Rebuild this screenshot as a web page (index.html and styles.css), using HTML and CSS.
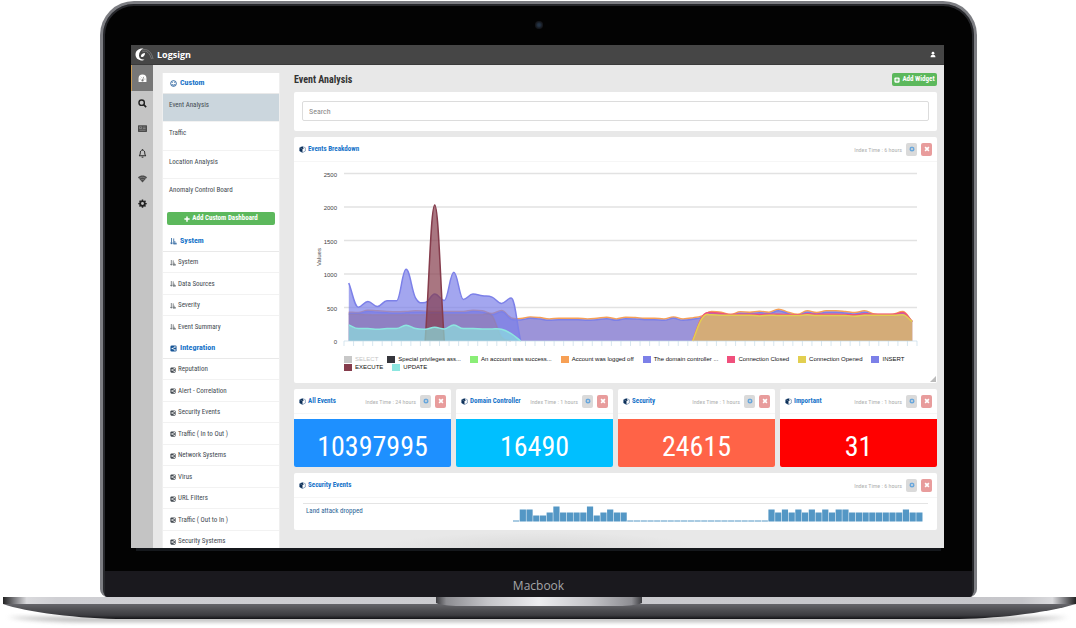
FILE: index.html
```html
<!DOCTYPE html>
<html lang="en">
<head>
<meta charset="utf-8">
<meta name="viewport" content="width=device-width, initial-scale=1">
<title>Logsign - Event Analysis</title>
<link rel="stylesheet" href="styles.css">
</head>
<body>
<svg class="sprite" aria-hidden="true">
  <symbol id="gear" viewBox="0 0 16 16"><path fill-rule="evenodd" d="M6.8 1h2.4l.4 1.9 1.2.5 1.7-1 1.6 1.700-1 1.600.5 1.200L15.500 7v2.200l-1.900.4-.5 1.200 1 1.700-1.600 1.600-1.700-1-1.200.5-.4 1.900H6.800l-.4-1.900-1.200-.5-1.700 1-1.600-1.600 1-1.700-.5-1.200L.5 9.200V7l1.900-.4.5-1.200-1-1.600 1.600-1.700 1.700 1 1.200-.5zM8 5.500a2.600 2.600 0 1 0 0 5.200 2.600 2.600 0 0 0 0-5.200z"/></symbol>
  <symbol id="close" viewBox="0 0 16 16"><path d="M3 3l10 10M13 3L3 13" stroke="currentColor" stroke-width="4.500"/></symbol>
  <symbol id="cube" viewBox="0 0 16 16"><path d="M8 1l6.500 3v7.500L8 15l-6.500-3.500V4z" fill="#fff" stroke="#3a6291" stroke-width="1.200"/><path d="M1.500 4L8 7v8l-6.500-3.500z" fill="#0d2f57"/><path d="M8 1L1.500 4 8 7l3-1.500z" fill="#0d2f57"/></symbol>
  <symbol id="sort" viewBox="0 0 16 16"><path d="M3.500 0v13M1 10.500l2.500 3.500L6 10.500M8.500 1v13M11 7v7M8 13.500h7.500M13.500 10.500v3" fill="none" stroke="currentColor" stroke-width="1.700"/></symbol>
  <symbol id="share" viewBox="0 0 16 16"><rect x="1" y="1" width="14" height="14" rx="3"/><path d="M11.500 4.500L5.500 8l6 3.500" fill="none" stroke="#fff" stroke-width="1.600"/><circle cx="11.500" cy="4.500" r="1.700" fill="#fff"/><circle cx="5.200" cy="8" r="1.700" fill="#fff"/><circle cx="11.500" cy="11.500" r="1.700" fill="#fff"/></symbol>
</svg>

<div class="laptop">
  <div class="lid">
    <span class="camera"></span>
    <div class="screen">
      <header class="topbar">
        <a class="brand" href="#">
          <svg class="brand-mark" viewBox="0 0 38 26" aria-hidden="true">
            <path d="M17 1C8 0 1 5 1 13c0 7 5 11 12 12 3 0 5-1 6-2-6 1-11-2-11-8 0-6 3-11 9-14z" fill="#fff"/>
            <path d="M12 15c1-3 4-5 8-5 0 4-2 7-5 8-2 0-4-1-3-3z" fill="#fff"/>
            <path d="M14 4c11-4 20 5 22 18M15 7c9-3 15 4 18 15" fill="none" stroke="#999" stroke-width="1.200"/>
          </svg>
          <span>Logsign</span>
        </a>
        <button class="user" aria-label="Account"><svg viewBox="0 0 16 16"><circle cx="8" cy="4.500" r="3.700"/><path d="M1.500 15c0-5 3-6.500 6.500-6.500s6.500 1.500 6.500 6.500z"/></svg></button>
      </header>
      <div class="workspace">
        <nav class="rail">
          <a class="active" href="#" aria-label="Dashboards"><svg viewBox="0 0 16 16"><path d="M1 14V8a7 7 0 0 1 14 0v6z"/><path d="M8 12l2-7M3 9h1.500M5 5l1 1M11.500 9H13" stroke="#777" stroke-width="1.300"/><circle cx="8" cy="11.500" r="2" fill="#777"/></svg></a>
          <a href="#" aria-label="Search"><svg viewBox="0 0 16 16"><circle cx="6.500" cy="6.500" r="4.800" fill="none" stroke="currentColor" stroke-width="2.500"/><path d="M10 10l4.500 4.500" stroke="currentColor" stroke-width="3"/></svg></a>
          <a class="dim" href="#" aria-label="Reports"><svg viewBox="0 0 16 16"><rect x="0" y="2" width="16" height="12" rx="1"/><path d="M2.500 5h4v3h-4zM8.500 5.500h5M8.500 8h5M2.500 11h11" fill="none" stroke="#aaa"/></svg></a>
          <a href="#" aria-label="Alerts"><svg viewBox="0 0 16 16"><path d="M8 2c-3 0-4 2.500-4 5 0 3-1 4-2.200 5h12.400C13 11 12 10 12 7c0-2.500-1-5-4-5zM8 .5V2M6.500 14.500h3" fill="none" stroke="currentColor" stroke-width="1.700"/></svg></a>
          <a class="dim" href="#" aria-label="Network"><svg viewBox="0 0 16 16"><path d="M8 15L0 6c4-4.500 12-4.500 16 0z"/><path d="M2 8c3.500-3 8.500-3 12 0M4.500 11c2-1.700 5-1.700 7 0" fill="none" stroke="#aaa" stroke-width=".8"/></svg></a>
          <a href="#" aria-label="Settings"><svg><use href="#gear"/></svg></a>
        </nav>

        <aside class="sidebar">
          <h2><svg class="outline" viewBox="0 0 16 16"><circle cx="8" cy="8" r="6.500"/><path d="M4.500 9.500c1 3 6 3 7 0M5.500 5v1.500M10.500 5v1.500"/></svg>Custom</h2>
          <ul class="tall">
            <li class="selected"><a href="#">Event Analysis</a></li>
            <li><a href="#">Traffic</a></li>
            <li><a href="#">Location Analysis</a></li>
            <li><a href="#">Anomaly Control Board</a></li>
          </ul>
          <button class="green add-dashboard"><svg viewBox="0 0 16 16"><path d="M8 1v14M1 8h14" stroke="currentColor" stroke-width="4"/></svg>Add Custom Dashboard</button>
          <h2><svg><use href="#sort"/></svg>System</h2>
          <ul>
            <li><a href="#"><svg><use href="#sort"/></svg>System</a></li>
            <li><a href="#"><svg><use href="#sort"/></svg>Data Sources</a></li>
            <li><a href="#"><svg><use href="#sort"/></svg>Severity</a></li>
            <li><a href="#"><svg><use href="#sort"/></svg>Event Summary</a></li>
          </ul>
          <h2><svg><use href="#share"/></svg>Integration</h2>
          <ul>
            <li><a href="#"><svg><use href="#share"/></svg>Reputation</a></li>
            <li><a href="#"><svg><use href="#share"/></svg>Alert - Correlation</a></li>
            <li><a href="#"><svg><use href="#share"/></svg>Security Events</a></li>
            <li><a href="#"><svg><use href="#share"/></svg>Traffic ( In to Out )</a></li>
            <li><a href="#"><svg><use href="#share"/></svg>Network Systems</a></li>
            <li><a href="#"><svg><use href="#share"/></svg>Virus</a></li>
            <li><a href="#"><svg><use href="#share"/></svg>URL Filters</a></li>
            <li><a href="#"><svg><use href="#share"/></svg>Traffic ( Out to In )</a></li>
            <li><a href="#"><svg><use href="#share"/></svg>Security Systems</a></li>
          </ul>
        </aside>

        <main class="main">
          <div class="title-row">
            <h1>Event Analysis</h1>
            <button class="green add-widget"><svg viewBox="0 0 16 16"><rect x="1" y="1" width="14" height="14" rx="3" fill="#fff"/><path d="M8 4v8M4 8h8" stroke="#5cb85c" stroke-width="2.500"/></svg>Add Widget</button>
          </div>
          <form class="card search"><input type="search" placeholder="Search" aria-label="Search"></form>

          <section class="card breakdown">
            <div class="card-head">
              <h3><svg><use href="#cube"/></svg>Events Breakdown</h3>
              <span class="index">Index Time : 6 hours</span>
              <button class="tool" aria-label="Settings"><svg><use href="#gear"/></svg></button>
              <button class="tool remove" aria-label="Remove"><svg><use href="#close"/></svg></button>
            </div>
            <svg class="chart" id="chart" viewBox="0 0 643 188" role="img" aria-label="Events Breakdown"></svg>
            <ul class="legend">
              <li class="off"><i class="c-grey"></i>SELECT</li>
              <li><i class="c-dark"></i>Special privileges ass...</li>
              <li><i class="c-green"></i>An account was success...</li>
              <li><i class="c-orange"></i>Account was logged off</li>
              <li><i class="c-violet"></i>The domain controller ...</li>
              <li><i class="c-pink"></i>Connection Closed</li>
              <li><i class="c-yellow"></i>Connection Opened</li>
              <li><i class="c-violet"></i>INSERT</li>
              <li><i class="c-maroon"></i>EXECUTE</li>
              <li><i class="c-teal"></i>UPDATE</li>
            </ul>
            <span class="grip"></span>
          </section>

          <div class="tiles">
            <section class="card tile">
              <div class="card-head">
                <h3><svg><use href="#cube"/></svg>All Events</h3>
                <span class="index">Index Time : 24 hours</span>
                <button class="tool" aria-label="Settings"><svg><use href="#gear"/></svg></button>
                <button class="tool remove" aria-label="Remove"><svg><use href="#close"/></svg></button>
              </div>
              <p class="count blue">10397995</p>
            </section>
            <section class="card tile">
              <div class="card-head">
                <h3><svg><use href="#cube"/></svg>Domain Controller</h3>
                <span class="index">Index Time : 1 hours</span>
                <button class="tool" aria-label="Settings"><svg><use href="#gear"/></svg></button>
                <button class="tool remove" aria-label="Remove"><svg><use href="#close"/></svg></button>
              </div>
              <p class="count sky">16490</p>
            </section>
            <section class="card tile">
              <div class="card-head">
                <h3><svg><use href="#cube"/></svg>Security</h3>
                <span class="index">Index Time : 1 hours</span>
                <button class="tool" aria-label="Settings"><svg><use href="#gear"/></svg></button>
                <button class="tool remove" aria-label="Remove"><svg><use href="#close"/></svg></button>
              </div>
              <p class="count tomato">24615</p>
            </section>
            <section class="card tile">
              <div class="card-head">
                <h3><svg><use href="#cube"/></svg>Important</h3>
                <span class="index">Index Time : 1 hours</span>
                <button class="tool" aria-label="Settings"><svg><use href="#gear"/></svg></button>
                <button class="tool remove" aria-label="Remove"><svg><use href="#close"/></svg></button>
              </div>
              <p class="count red">31</p>
            </section>
          </div>

          <section class="card events">
            <div class="card-head">
              <h3><svg><use href="#cube"/></svg>Security Events</h3>
              <span class="index">Index Time : 6 hours</span>
              <button class="tool" aria-label="Settings"><svg><use href="#gear"/></svg></button>
              <button class="tool remove" aria-label="Remove"><svg><use href="#close"/></svg></button>
            </div>
            <div class="event-row">
              <a href="#">Land attack dropped</a>
              <svg class="spark" id="spark" viewBox="0 0 410 16" role="img" aria-label="Land attack dropped over time"></svg>
            </div>
          </section>
        </main>
      </div>
    </div>
    <div class="edge"></div>
    <div class="chin">Macbook</div>
  </div>
  <svg class="base" viewBox="0 0 1076 31" preserveAspectRatio="none" aria-hidden="true">
    <defs>
      <linearGradient id="under" x1="0" y1="0" x2="0" y2="1"><stop offset="0" stop-color="#66666b"/><stop offset=".3" stop-color="#545458"/><stop offset=".75" stop-color="#3c3c40"/><stop offset="1" stop-color="#131316"/></linearGradient>
      <linearGradient id="lip"><stop offset="0" stop-color="#222"/><stop offset=".01" stop-color="#77777b"/><stop offset=".022" stop-color="#dadadd"/><stop offset=".05" stop-color="#cfcfd3"/><stop offset=".95" stop-color="#c6c6ca"/><stop offset=".978" stop-color="#dadadd"/><stop offset=".99" stop-color="#77777b"/><stop offset="1" stop-color="#222"/></linearGradient>
      <linearGradient id="notch"><stop offset="0" stop-color="#3c3c40"/><stop offset=".05" stop-color="#8d8d92"/><stop offset=".25" stop-color="#c4c4c8"/><stop offset=".5" stop-color="#ededf0"/><stop offset=".75" stop-color="#c4c4c8"/><stop offset=".95" stop-color="#8d8d92"/><stop offset="1" stop-color="#3c3c40"/></linearGradient>
      <filter id="soft" x="-5%" y="-100%" width="110%" height="300%"><feGaussianBlur stdDeviation="3 2"/></filter>
    </defs>
    <path d="M8 20h1060q-30 5-80 5H90q-50 0-82-5z" fill="#888" opacity=".6" filter="url(#soft)"/>
    <path d="M3 7h1073C1050 15 1000 22 950 22H125C80 22 25 15 3 7z" fill="url(#under)"/>
    <path d="M3 0h1073v7H3z" fill="url(#lip)"/>
    <path d="M436 0h206v6q-3 2-20 3H456q-17-1-20-3z" fill="url(#notch)"/>
  </svg>
</div>
<script src="chart.js"></script>
</body>
</html>
```

FILE: styles.css
```css
:root {
  --narrow: "Roboto Condensed", Roboto, sans-serif;
  --link: #1673c9;
}
* { box-sizing: border-box; }
body { margin: 0; background: #fff; font-family: var(--narrow); font-size: 7px; line-height: 9px; color: #444b52; }
h1, h2, h3, p, ul { margin: 0; padding: 0; }
ul { list-style: none; }
a { color: inherit; text-decoration: none; }
button { border: 0; padding: 0; font: inherit; color: inherit; background: none; cursor: pointer; }
svg { display: block; flex: none; fill: currentColor; }
.sprite { position: absolute; width: 0; height: 0; }

.laptop { height: 100vh; min-height: 628px; padding-top: 1px; display: flex; flex-direction: column; }
.lid { position: relative; flex: 1; min-height: 0; margin: 0 99px 0 100px; display: flex; flex-direction: column; background: #030303; border: 3px solid #7c7d82; border-bottom: 0; border-radius: 34px 34px 8px 8px; box-shadow: inset 0 0 0 2px #27282c; overflow: hidden; }
.camera { position: absolute; top: 17px; left: 50%; width: 8px; height: 8px; margin-left: -4px; border-radius: 50%; background: radial-gradient(#243345 20%, #15171c 60%); }
.screen { flex: 1; min-height: 0; margin: 41px 30px 0 28px; display: flex; flex-direction: column; background: #e8e8e8; overflow: hidden; }
.edge { height: 3px; margin: 0 33px; background: #15181c; }
.chin { height: 26px; margin: 20px 2px 0; background: #1a191e; color: #a5a5a8; font: 12px/30px "Open Sans", sans-serif; text-align: center; }
.base { width: 100%; height: 31px; flex: none; }

.topbar { flex: none; height: 20px; padding: 0 8px 0 4px; display: flex; align-items: center; justify-content: space-between; background: #464646; color: #fff; border-bottom: 1px solid #3a3a3a; }
.brand { display: flex; align-items: center; gap: 3px; font: 700 9px/12px "Open Sans", sans-serif; }
.brand-mark { width: 19px; height: 13px; }
.user svg { width: 6px; height: 7px; }

.workspace { flex: 1; min-height: 0; display: flex; }
.rail { width: 22px; flex: none; background: #c4c4c4; color: #222; }
.rail a { height: 25px; display: flex; align-items: center; justify-content: center; }
.rail svg { width: 9px; height: 9px; }
.rail .dim { color: #4c4c4c; }
.rail .active { height: 26px; background: #777; color: #fff; border-left: 1px solid #c79a55; }

.sidebar { width: 118px; flex: none; margin: 8px 14px 0 9px; background: #fff; border: 1px solid #efefef; border-width: 0 1px; }
.sidebar h2 { height: 21px; padding-left: 7px; display: flex; align-items: center; gap: 3px; font-size: 8px; font-weight: 700; line-height: 10px; color: var(--link); border-bottom: 1px solid #e9e9e9; }
.sidebar h2 svg { width: 7px; height: 7px; color: #175596; }
.sidebar .outline { fill: none; stroke: currentColor; stroke-width: 2; }
.sidebar li { height: 21px; border-bottom: 1px solid #f2f2f2; }
.sidebar li:nth-child(even) { height: 22px; }
.sidebar li a { height: 100%; padding: 1px 0 0 7px; display: flex; align-items: center; gap: 2px; }
.sidebar li svg { width: 6px; height: 6px; }
.sidebar li:last-child { border-bottom-color: transparent; }
.sidebar .tall li { height: 28px; }
.sidebar .tall li:nth-child(even) { height: 29px; }
.sidebar .tall a { padding: 7px 6px 0; align-items: flex-start; }
.tall .selected { background: #cbd6dd; }
.green { display: flex; align-items: center; justify-content: center; gap: 2px; height: 13px; background: #5cb85c; color: #fff; border-radius: 2px; font-weight: 700; }
.green svg { width: 6px; height: 6px; }
.add-dashboard { width: calc(100% - 8px); margin: 4px 4px 6px; }

.main { flex: 1; min-width: 0; padding: 8px 7px 0 0; background: radial-gradient(ellipse 160px 16px at 38% 100%, #d9d9d9, transparent); }
.title-row { height: 13px; display: flex; align-items: center; justify-content: space-between; }
h1 { font-size: 10px; line-height: 13px; font-weight: 700; color: #333; }
.add-widget { width: 45px; }
.card { position: relative; margin-top: 6px; background: #fff; border-radius: 2px; }
.search { padding: 9px 8px 10px; }
.search input { display: block; width: 100%; height: 20px; padding: 0 6px; border: 1px solid #dcdcdc; border-radius: 2px; background: #fff; font: 8px/10px var(--narrow); color: #555; appearance: none; outline: 0; }
.search input::placeholder { color: #888; opacity: 1; }
.card-head { height: 25px; padding: 0 5px; display: flex; align-items: center; border-bottom: 1px solid #f6f6f6; }
.card-head h3 { flex: 1; display: flex; align-items: center; gap: 2px; font-size: 7px; line-height: 10px; font-weight: 700; color: var(--link); white-space: nowrap; }
.card-head h3 svg { width: 7px; height: 7px; }
.index { color: #b0b0b0; font-size: 6px; white-space: nowrap; margin-right: 4px; }
.tool { flex: none; width: 11px; height: 13px; display: flex; align-items: center; justify-content: center; border-radius: 2px; background: #dadada; color: #69a7dc; }
.tool svg { width: 6px; height: 6px; }
.tool + .tool { margin-left: 4px; }
.remove { background: #e89c9c; color: #fff; }

.chart { width: 100%; height: auto; font-family: "Liberation Sans", sans-serif; font-size: 6px; }
.legend { padding: 5px 20px 12px 50px; display: flex; flex-wrap: wrap; column-gap: 9px; font: 6px/8px "Liberation Sans", sans-serif; color: #111; }
.legend li { display: flex; align-items: center; gap: 3px; white-space: nowrap; }
.legend .off { color: #c4c4c4; }
.legend i { width: 8px; height: 7px; }
.c-grey { background: #c8c8c8; }
.c-dark { background: #36363c; }
.c-green { background: #8aee77; }
.c-orange { background: #f7a055; }
.c-violet { background: #7c80e8; }
.c-pink { background: #f0507c; }
.c-yellow { background: #e2cf50; }
.c-maroon { background: #853c4c; }
.c-teal { background: #8ce6e0; }
.grip { position: absolute; right: 1px; bottom: 1px; border: 3px solid #bbb; border-top-color: transparent; border-left-color: transparent; }

.tiles { display: grid; grid-template-columns: repeat(4, 1fr); gap: 5px; }
.tile { overflow: hidden; }
.tile .card-head { margin-bottom: 5px; }
.count { height: 48px; padding-top: 8px; font-size: 28px; line-height: 40px; text-align: center; color: #fff; }
.blue { background: #1e90ff; }
.sky { background: #00bfff; }
.tomato { background: #ff6347; }
.red { background: #f00; }

.event-row { margin: 5px 9px 0; padding: 2px 4px 8px 3px; display: flex; align-items: flex-start; border-top: 1px solid #e4e4e4; color: #2a6496; }
.event-row a { flex: 1; padding-top: 1px; }
.spark { flex: 2; height: 16px; fill: #5497c5; }
```

FILE: chart.js
```js
const NS = "http://www.w3.org/2000/svg";

function add(parent, name, attrs, text) {
  const el = document.createElementNS(NS, name);
  for (const key in attrs) el.setAttribute(key, attrs[key]);
  if (text !== undefined) el.textContent = text;
  parent.appendChild(el);
  return el;
}

const LEFT = 50, RIGHT = 623, BASE = 179, PER_UNIT = 33.5 / 500;
const STEP = (RIGHT - LEFT) / 60;
const chart = document.getElementById("chart");

// start: index of the first category that the values belong to
const series = [
  { color: "#f7a055", fill: 0.5, start: 0, values: [430, 425, 460, 450, 440, 435, 440, 450, 445, 440, 440, 440, 440, 460, 450, 410, 455, 345, 335, 360, 350, 330, 340, 340, 340, 330, 340, 355, 330, 355, 350, 340, 340, 330, 360, 330, 345, 375, 440, 430, 395, 435, 430, 445, 430, 475, 430, 400, 450, 425, 450, 450, 440, 425, 450, 405, 395, 400, 440, 290] },
  { color: "#7c80e8", fill: 0.75, start: 0, values: [410, 410, 440, 430, 420, 415, 420, 430, 425, 420, 420, 420, 420, 440, 430, 390, 435, 325, 315, 338, 328, 308, 318, 318, 318, 308, 318, 333, 308, 333, 328, 318, 318, 308, 338, 308, 323, 353, 415, 408, 380, 413, 408, 423, 408, 450, 408, 380, 428, 403, 428, 428, 418, 403, 428, 385, 380, 382, 415, 285] },
  { color: "#f0507c", fill: 0.4, start: 36, values: [0, 360, 425, 410, 395, 400, 400, 395, 400, 400, 395, 390, 405, 400, 400, 400, 395, 390, 405, 400, 400, 400, 425, 290] },
  { color: "#e2cf50", fill: 0.6, start: 36, values: [0, 340, 390, 385, 385, 385, 385, 375, 385, 380, 380, 380, 390, 380, 380, 380, 380, 370, 385, 385, 385, 385, 390, 290] },
  { color: "#7c80e8", fill: 0.7, start: 0, values: [865, 505, 590, 515, 600, 600, 1070, 640, 575, 700, 605, 1025, 620, 700, 675, 655, 560, 640, 0] },
  { color: "#9c7c9c", fill: 0.45, start: 0, values: [400, 400, 395, 390, 390, 390, 395, 390, 395, 400, 395, 395, 395, 395, 395, 380, 60, 0] },
  { color: "#853c4c", fill: 0.7, start: 8, values: [0, 2030, 0] },
  { color: "#8ce6e0", fill: 0.65, start: 0, values: [240, 185, 185, 175, 185, 185, 235, 185, 175, 205, 180, 240, 185, 185, 180, 180, 175, 110, 0] }
];

// Smooth curve through the points; the slope is flat at each local extremum.
function curve(points) {
  const slope = points.map((p, i) => {
    const a = points[i - 1], b = points[i + 1];
    if (!a || !b) return null;
    return (p.y - a.y) * (b.y - p.y) <= 0 ? 0 : (b.y - a.y) / (b.x - a.x);
  });
  let d = `M${points[0].x} ${points[0].y}`;
  for (let i = 1; i < points.length; i++) {
    const p = points[i - 1], q = points[i], h = (q.x - p.x) * 0.4;
    const line = (q.y - p.y) / (q.x - p.x);
    const s = slope[i - 1] === null ? line : slope[i - 1];
    const e = slope[i] === null ? line : slope[i];
    d += `C${p.x + h} ${p.y + s * h} ${q.x - h} ${q.y - e * h} ${q.x} ${q.y}`;
  }
  return d;
}

for (let value = 0; value <= 2500; value += 500) {
  const y = BASE - value * PER_UNIT;
  if (value) add(chart, "path", { d: `M${LEFT} ${y}H${RIGHT}`, stroke: "#e2e2e2", "stroke-width": 1.5 });
  add(chart, "text", { x: 43, y: y + 3, "text-anchor": "end", fill: "#444" }, value);
}
add(chart, "text", { transform: "translate(27 95) rotate(-90)", "text-anchor": "middle", fill: "#444" }, "Values");

for (const s of series) {
  const points = s.values.map((v, i) => ({ x: LEFT + STEP * (s.start + i + 0.5), y: BASE - v * PER_UNIT }));
  const line = curve(points);
  const end = points[points.length - 1].x;
  add(chart, "path", { d: `${line}L${end} ${BASE}H${points[0].x}Z`, fill: s.color, "fill-opacity": s.fill });
  add(chart, "path", { d: line, fill: "none", stroke: s.color, "stroke-width": 1.5, "stroke-opacity": s.color === "#9c7c9c" ? 0.4 : 1 });
}

let ticks = `M${LEFT} ${BASE}H${RIGHT}`;
for (let i = 0; i <= 60; i++) ticks += `M${LEFT + i * STEP} ${BASE}v5`;
add(chart, "path", { d: ticks, fill: "none", stroke: "#c5dbe8", "stroke-width": 0.7 });

const bars = [1, 12, 12, 6, 6, 9, 15, 9, 9, 9, 9, 15, 6, 9, 12, 9, 9, ...Array(21).fill(1),
  12, 9, 12, 9, 12, 9, 12, 9, 12, 9, 12, 12, 9, 9, 9, 9, 9, 9, 9, 9, 12, 9, 9];
const spark = document.getElementById("spark");
bars.forEach((h, i) => add(spark, "rect", { x: i * 410 / bars.length, y: 15.5 - h, width: 6.2, height: h }));
```
